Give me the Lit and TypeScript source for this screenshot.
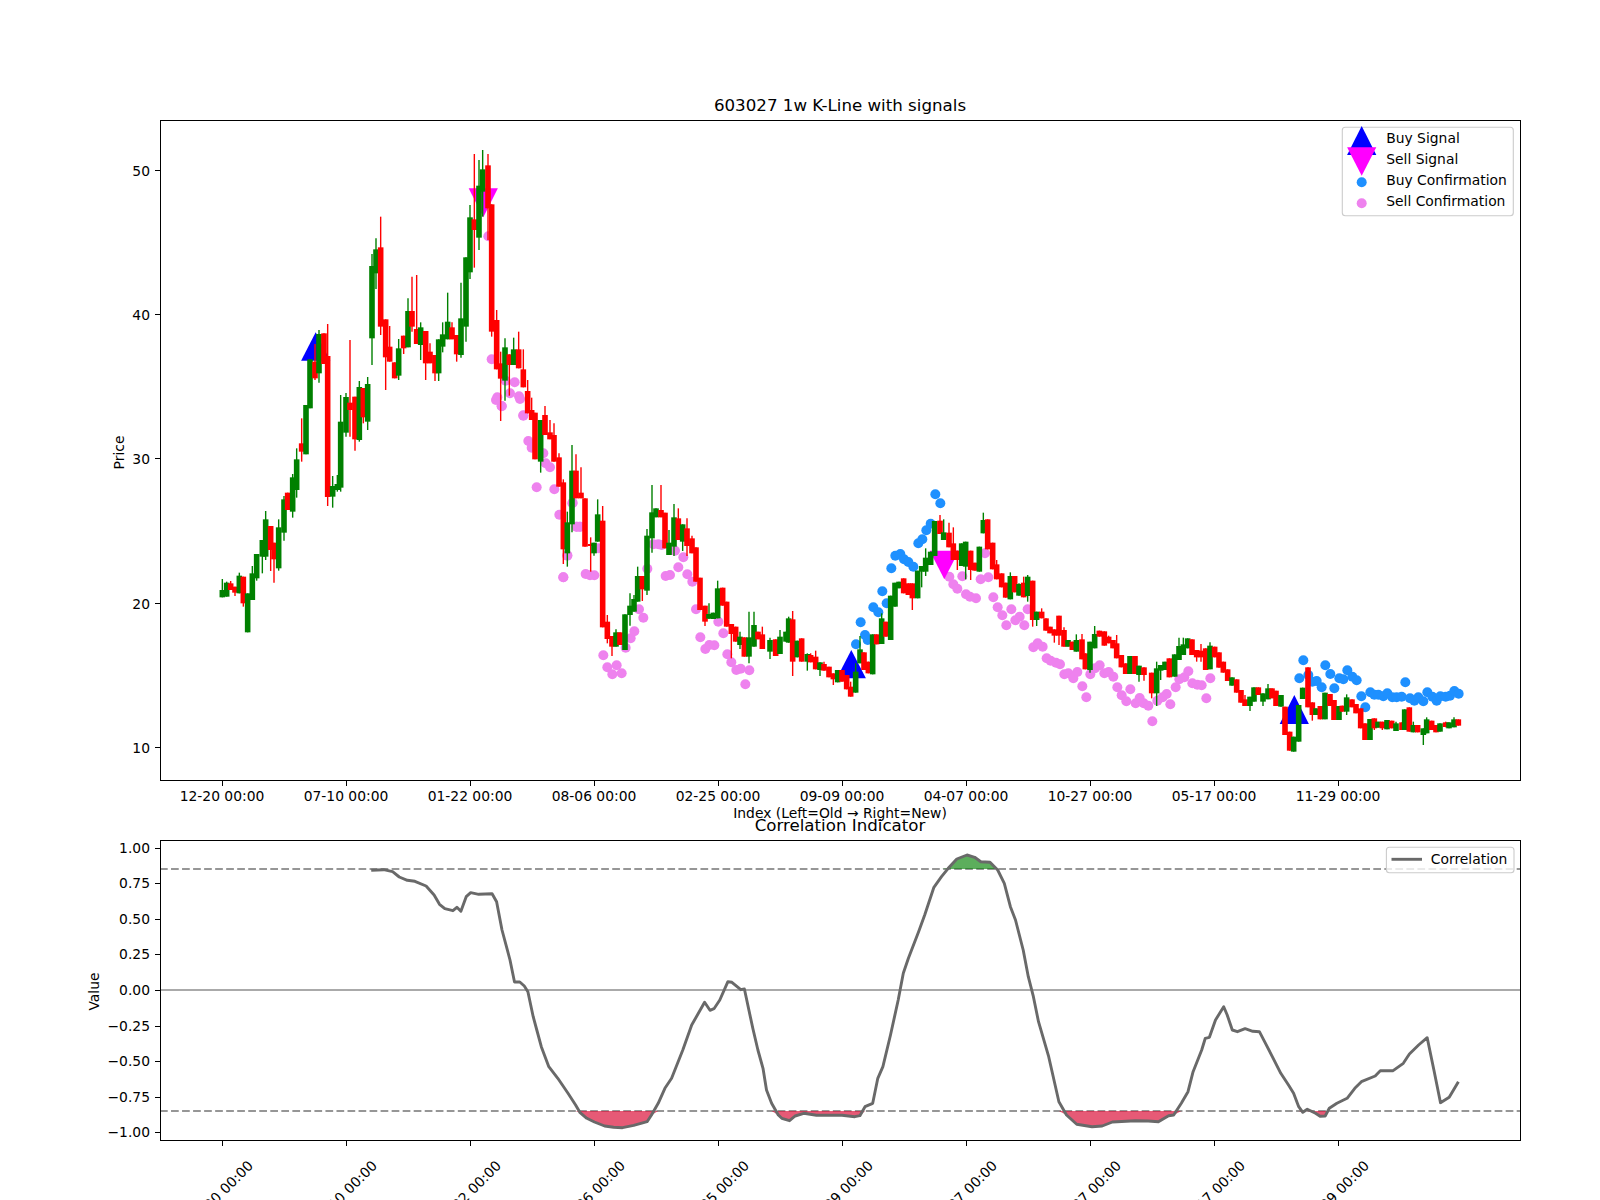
import { LitElement, html, svg, css } from "lit";
import { customElement } from "lit/decorators.js";

// Each segment is [originX, originY, rows]; a row is "colour x top bottom wickTop wickBottom", measured at 3x.
const SEGMENTS: [number, number, string][] = [
  [200, 400, `g 67 570 592 537;g 80 548 590 545;r 92 550 570 543;r 105 560 578 - 588;g 118 527 580 518;r 130 530 610 - 620;g 143 580 697;g 157 520 600 498;g 170 462 535 - 542;g 187 420 470 - 520;g 197 358 470 333 480;r 212 378 450 - 513;r 222 428 478 - 548;g 236 382 505 358 512;g 252 298 398 288 422;r 263 278 330;g 278 232 335 222 353;g 290 178 270 145 293;r 305 130 155 55 185;g 318 15 163`],
  [140, 90, `g 510 808 955;r 525 815 865 762 870;g 537 732 850 720 878;r 552 730 822;r 563 798 1221 702 1248`],
  [200, 400, `g 398 258 290 228 323;g 412 252 270 225 275;g 422 65 263 -15 275;g 438 -9 98 -21 110;r 450 8 30 -180 110;r 465 -10 118 - 152;g 478 -39 120 -57 125;r 490 -36 52 - 70;g 503 -48 65 -69 90`],
  [140, 90, `g 696 528 745 492 825;g 708 478 550 445 597;r 722 472 710 380 735;r 737 688 802 - 900;r 749 770 815 708;r 764 817 865;g 776 775 857 747 870;r 791 737 775 - 792;g 804 663 772 625;r 816 663 710 560 725;r 830 717 762 555;g 842 712 765 697 810;r 857 723 820 - 870;r 870 785 820 760;r 885 795 850 - 873;g 896 748 850 - 873;g 908 733 770 697 787;g 923 695 748 608;r 936 712 748 697;r 950 735 793 - 815;g 963 685 795 578 803;g 978 502 710 - 755;g 990 382 547 345 567;r 1003 388 420 192 533;g 1017 287 443 210 480;g 1028 238 305 180 380;r 1044 226 355 192 450;r 1055 343 725 - 740;r 1070 690 838 660;r 1082 820 866 785 993;g 1095 772 872 745 932;r 1108 793 825 - 917;g 1121 778 825 743;r 1136 778 835 725;r 1150 838 892 778`],
  [440, 130, `r 263 783 850 750;r 275 840 870 803`],
  [200, 400, `r 1005 38 178;g 1022 60 185 - 218;r 1035 45 105 18;r 1050 97 118 60;r 1062 105 185 70;r 1077 172 260 160;r 1090 247 448 238 492;g 1102 367 460 335 500;g 1116 212 373 135 397;r 1128 212 295 163;r 1143 278 295 202;r 1155 295 440;r 1172 432 438 412 515;g 1182 428 460 - 467;g 1193 343 425 298;r 1208 362 682 318;r 1222 665 717 645 730;r 1236 708 740 - 768;g 1248 697 740 688`],
  [560, 430, `r 180 607 645;g 195 553 660;g 210 527 555 490 587;g 222 507 545 495;g 233 438 515 410;r 247 438 478 - 513;g 261 317 482 297 495;g 276 247 325 165 368;g 288 235 262;r 303 240 262 165;r 315 248 355;g 327 338 375 300;g 342 262 350 222 378;r 355 265 330 235;g 368 283 335 - 363;r 381 295 348 265 378;r 396 325 370 317;r 408 352 455;r 420 443 540;r 435 527 575 - 588;g 447 552 566 520 567;g 460 548 567;g 473 475 565 452;r 488 473 527;r 500 515 590;r 514 582 612 - 685;r 527 590 635;g 540 620 645 605 657;r 553 622 680;g 567 622 680 545 700;g 582 585 650 545;r 594 605 628;r 607 613 657 590;g 630 630 665 623 687;r 647 628 678;g 660 620 672 600;g 678 605 635;g 686 565 638 560;r 698 568 695 543 738;g 712 632 682;r 725 625 695;g 742 672 695 670 722;r 752 675 697 670;r 767 680 718 662;g 780 697 720 - 738;r 792 702 722 695;r 807 710 742;r 820 730 748 - 765;g 833 720 757;r 846 720 755;r 860 735 778;r 872 770 800 755;g 887 725 788 700;g 900 658 700 618;r 912 667 720;r 925 695 730;g 938 613 733;r 950 613 643;g 965 565 642 550;r 978 575 620;g 992 497 630;g 1005 458 530;g 1017 455 475;r 1031 445 490;r 1045 460 495;r 1057 460 505 - 540;g 1073 422 505;g 1085 408 425 - 472;g 1097 383 425 355 438;g 1112 365 405;g 1124 273 378;r 1140 272 312 255;g 1151 307 330 268;r 1167 308 352 278;r 1180 340 390 292;r 1192 362 390 - 420;g 1205 340 408;g 1217 335 410 - 448;r 1232 362 420 - 450;r 1245 398 422;g 1258 350 425`],
  [820, 470, `g 490 150 190 128;r 503 148 238;r 518 218 298;r 530 283 328 270;r 545 310 352;r 557 338 383;g 571 318 388 307;r 584 318 367;g 597 342 377 340;r 611 338 382 320;g 623 320 378 315 395;r 638 332 450 - 470;g 650 425 450 - 468;r 665 425 445 415;r 678 445 482;r 690 470 490;r 703 478 497 - 518;r 717 437 497 - 525;r 732 480 530 472;g 744 510 530;r 757 515 540;g 769 510 545 493;r 786 508 568 492;r 796 550 598;g 810 515 600 - 608;g 824 492 535 468;r 838 482 500;r 853 484 527;r 866 500 520 497;r 879 510 535;r 890 520 565 495;r 904 555 592;r 917 580 612;g 930 558 612;r 945 558 612;g 957 587 615 - 635;r 972 592 615 - 632`],
  [1140, 600, `r 35 218 280 - 295;g 50 205 280 185 318;g 62 195 212 - 240;g 75 185 210;r 88 175 232;g 104 163 230;g 117 138 180 113;g 130 133 165 113;g 143 115 145;r 156 118 165;r 170 150 172 - 185;r 183 152 172 132 185;r 197 145 210;g 210 137 208 127;r 224 140 172;r 237 157 203;r 250 185 218;r 263 208 243;g 276 232 257;r 290 238 278;r 303 270 308;r 315 298 318 285;g 330 290 318 - 333;g 342 262 305;r 355 262 285;g 369 280 305 - 318;g 384 265 298 252;r 396 265 295;r 408 272 318;g 423 285 320;r 435 320 405;r 449 395 452;g 461 410 455;g 476 315 425;g 488 263 297;r 504 202 322;r 517 307 345 - 362;g 528 325 345;r 541 318 358;g 555 278 358;r 570 282 318;r 582 300 360;g 597 318 360;r 607 317 335;g 620 292 335 283 345;r 636 298 322;r 648 312 340;r 662 325 385;r 675 370 420;g 690 357 420;r 703 355 385 - 390;g 714 365 383;r 727 365 385 - 390;g 741 360 388;r 755 362 385;g 768 370 393 365;r 786 367 390;g 794 328 390;r 808 322 395;g 820 375 397 365;r 833 375 397;g 850 385 405 - 435;g 860 358 400 352;r 875 362 390;r 888 375 397;g 900 370 395;r 917 367 381 365 382;g 927 367 385;g 942 358 382 352;r 955 358 377`],
];

const pts = (ox: number, oy: number, raw: string) =>
  raw.split(" ").map((p) => {
    const [a, b] = p.split(",").map(Number);
    return [ox + a / 3, oy + b / 3];
  });

const PINK = [
  ...pts(440, 130, "145,319 155,688 197,752 224,757 172,802 210,790 237,799 185,829 250,857"),
  ...pts(200, 400, "905,18 888,0 960,-3 970,46 985,123 995,143 1030,160 1037,190 1050,202 1010,262 1063,268 1117,310 1078,344 1130,380 1140,380 1090,532 1102,466 1157,522 1170,526 1183,526"),
  ...pts(560, 430, "10,442 22,377 38,218 50,290 60,290 115,355 130,676 142,712 157,733 170,706 185,730 197,653 212,625 223,604 237,538 250,563 262,416 280,343 295,343 305,345 345,362 317,438 330,435 355,412 370,382 382,433 397,455 408,538 421,622 436,657 448,645 463,646 475,575 490,610 502,673 514,697 529,720 542,716 568,721 556,763"),
  ...pts(820, 470, "495,250 388,320 427,319 400,343 412,356 438,373 450,380 468,385 482,328 505,322 520,382 533,412 574,418 623,418 547,436 599,440 586,451 559,466 613,466 640,532 653,520 668,530 680,565 692,572 708,578 720,583 733,613 745,610 760,625 772,606 787,649 799,682 811,613 825,595 839,586 853,610 866,606 880,620 892,652 905,676 919,694 931,658 947,700 959,684 971,700 985,707 997,754 1012,692 1028,682 1040,672 1051,703 1067,652 1078,628 1093,622 1105,604 1117,640 1132,644 1145,646 1159,685 1171,625"),
];

const BLUE = [
  ...pts(820, 470, "108,523 122,457 135,495 143,510 160,412 175,427 187,364 200,400 214,295 226,257 241,252 252,268 265,276 280,290 295,220 307,208 319,181 332,161 346,73 361,100"),
  ...pts(1140, 600, "478,235 490,181 505,225 517,245 530,243 545,262 556,196 571,222 583,265 598,235 610,238 622,211 637,230 650,241 664,289 676,322 691,277 703,284 715,284 730,289 742,280 757,292 770,292 785,290 796,247 810,295 823,302 835,292 850,304 862,277 877,290 890,302 901,289 917,290 930,287 943,273 956,281"),
];

const corr8 = "697,301 725,299 745,305 760,321 778,331 795,334 820,348 838,375 850,403 862,416 880,422 889,412 898,424 910,380 920,368 938,373 968,371 978,395 990,480 1008,570 1018,636 1030,636 1040,648 1048,665 1060,740 1068,780 1078,830 1095,890 1115,925 1138,970 1155,1005 1165,1028 1180,1045 1197,1056 1220,1068 1240,1072 1260,1073 1285,1066 1315,1055 1325,1035 1340,1000 1355,955 1370,925 1395,840 1415,765 1444,697 1456,721 1465,716 1478,690 1496,635 1505,637 1525,659 1533,657";
const corr9 = "25,775 35,840 45,895 52,960 62,1000 75,1035 82,1045 97,1052 108,1038 125,1030 150,1036 200,1036 225,1040 235,1037 245,1010 260,1000 270,925 280,890 295,795 310,690 320,610 330,565 350,485 362,435 380,352 395,320 408,295 425,267 445,255 460,262 472,275 490,277 505,300 518,340 530,410 540,450 555,540 565,620 575,680 585,755 605,860 625,995 640,1035 660,1063 690,1070 710,1068 730,1056 775,1052 800,1053 820,1055 840,1037 850,1035 865,1000 878,965 888,905 905,840 912,805 920,802 932,750 948,710 955,735 965,780 975,785 990,776 1005,784 1018,785 1030,820 1045,865 1060,910 1075,945 1085,970 1095,1010 1103,1027 1112,1018 1128,1030 1137,1039 1147,1038 1155,1015 1170,1000 1190,985 1205,955 1218,935 1245,918 1255,902 1280,902 1300,880 1312,852 1330,825 1347,803 1360,900 1373,998 1390,982 1408,935";
const scalePts = (raw: string, ox: number, k: number) =>
  raw.split(" ").map((p) => {
    const [a, b] = p.split(",").map(Number);
    return [ox + a / k, 770 + b / 3];
  });
const CORR = [...scalePts(corr8, 60, 2.24), ...scalePts(corr9, 740, 1.96)];
const LOW = 1111;
const HIGH = 869;
const poly = (list: number[][]) => list.map((p) => `${p[0].toFixed(1)},${p[1].toFixed(1)}`).join(" ");

const TICKS = [
  [222.5, "12-20 00:00"], [346.5, "07-10 00:00"], [470.5, "01-22 00:00"], [594.5, "08-06 00:00"], [718.5, "02-25 00:00"],
  [842.5, "09-09 00:00"], [966.5, "04-07 00:00"], [1090.5, "10-27 00:00"], [1214.5, "05-17 00:00"], [1338.5, "11-29 00:00"],
] as [number, string][];
const PRICE = [[170.5, "50"], [314.5, "40"], [458.5, "30"], [603.5, "20"], [747.5, "10"]] as [number, string][];
const VALUE = [1, 0.75, 0.5, 0.25, 0, -0.25, -0.5, -0.75, -1];

const up = (x: number, apex: number, base: number) => `${x},${apex} ${x - 14.6},${base} ${x + 14.6},${base}`;
const down = (x: number, top: number, apex: number) => `${x - 14.6},${top} ${x + 14.6},${top} ${x},${apex}`;

@customElement("app-root")
export class AppRoot extends LitElement {
  static styles = css`
    :host { display: block; width: 1600px; height: 1200px; background: #fff; overflow: hidden; }
    svg { display: block; }
    text { font-family: "DejaVu Sans", sans-serif; font-size: 13.89px; fill: #000; }
    .title { font-size: 16.67px; text-anchor: middle; }
    .mid { text-anchor: middle; }
    .end { text-anchor: end; }
    .spine { fill: none; stroke: #000; stroke-width: 1; }
    .tick { stroke: #000; stroke-width: 1; }
    .frame { fill: #fff; fill-opacity: 0.8; stroke: #ccc; stroke-width: 1.11; }
    .wick { stroke-width: 1.4; }
    .g { stroke: #008000; fill: #008000; }
    .r { stroke: #ff0000; fill: #ff0000; }
    .body { stroke: none; }
    .pink { fill: #ee82ee; }
    .blue { fill: #1e90ff; }
    .buy { fill: #0000ff; }
    .sell { fill: #ff00ff; }
    .level { stroke: #969696; stroke-width: 2.08; stroke-dasharray: 7.7 3.33; }
    .zero { stroke: #aaaaaa; stroke-width: 2.08; }
    .corr { fill: none; stroke: #696969; stroke-width: 2.9; stroke-linejoin: round; }
    .fill-low { fill: #dc143c; fill-opacity: 0.7; }
    .fill-high { fill: #008000; fill-opacity: 0.64; }
  `;

  private candles() {
    const rows = SEGMENTS.flatMap(([ox, oy, raw]) =>
      raw.split(";").map((row) => {
        const [c, x, t, b, wt, wb] = row.split(" ");
        const top = oy + Number(t) / 3;
        const bot = oy + Number(b) / 3;
        return {
          c,
          x: ox + Number(x) / 3,
          top,
          bot,
          wt: wt && wt !== "-" ? oy + Number(wt) / 3 : top,
          wb: wb && wb !== "-" ? oy + Number(wb) / 3 : bot,
        };
      })
    ).sort((p, q) => p.x - q.x);
    return rows.map(
      (k) => svg`<line class="wick ${k.c}" x1=${k.x} x2=${k.x} y1=${k.wt} y2=${k.wb}></line>
        <rect class="body ${k.c}" x=${k.x - 2.8} y=${k.top} width="5.6" height=${k.bot - k.top}></rect>`
    );
  }

  render() {
    return html`<svg width="1600" height="1200" viewBox="0 0 1600 1200" xmlns="http://www.w3.org/2000/svg">
      <rect width="1600" height="1200" fill="#fff"></rect>

      ${PINK.map((p) => svg`<circle class="pink" cx=${p[0]} cy=${p[1]} r="5"></circle>`)}
      ${BLUE.map((p) => svg`<circle class="blue" cx=${p[0]} cy=${p[1]} r="5"></circle>`)}
      <polygon class="buy" points=${up(315.7, 332.3, 360.7)}></polygon>
      <polygon class="buy" points=${up(851.3, 650, 678.3)}></polygon>
      <polygon class="buy" points=${up(1294.3, 695, 724)}></polygon>
      <polygon class="sell" points=${down(483.3, 188.3, 217.3)}></polygon>
      <polygon class="sell" points=${down(944.3, 550.7, 579.3)}></polygon>
      ${this.candles()}

      <rect class="spine" x="160.5" y="120.5" width="1360" height="660"></rect>
      ${PRICE.map(([y, t]) => svg`<line class="tick" x1="155" x2="160" y1=${y} y2=${y}></line>
        <text class="end" x="150" y=${y + 5.3}>${t}</text>`)}
      ${TICKS.map(([x, t]) => svg`<line class="tick" x1=${x} x2=${x} y1="781" y2="786"></line>
        <text class="mid" x=${x - 0.5} y="800.6">${t}</text>`)}
      <text class="title" x="840" y="111.2">603027 1w K-Line with signals</text>
      <text class="mid" transform="translate(124,452.5) rotate(-90)">Price</text>
      <text class="mid" x="840" y="818">Index (Left=Old → Right=New)</text>

      <rect class="frame" x="1342.3" y="127.3" width="171" height="88.4" rx="3"></rect>
      <polygon class="buy" points=${up(1361.7, 126, 155)}></polygon>
      <polygon class="sell" points=${down(1361.7, 147.3, 175.7)}></polygon>
      <circle class="blue" cx="1361.7" cy="182.3" r="5"></circle>
      <circle class="pink" cx="1361.7" cy="203.3" r="5"></circle>
      <text x="1386.2" y="143.3">Buy Signal</text>
      <text x="1386.2" y="164.2">Sell Signal</text>
      <text x="1386.2" y="185.2">Buy Confirmation</text>
      <text x="1386.2" y="206">Sell Confirmation</text>

      <line class="level" x1="160" x2="1520" y1=${HIGH} y2=${HIGH}></line>
      <line class="level" x1="160" x2="1520" y1=${LOW} y2=${LOW}></line>
      <line class="zero" x1="160" x2="1520" y1="990" y2="990"></line>
      <polygon class="fill-low" points=${poly(CORR.map((p) => [p[0], Math.max(p[1], LOW)]))}></polygon>
      <polygon class="fill-high" points=${poly(CORR.map((p) => [p[0], Math.min(p[1], HIGH)]))}></polygon>
      <polyline class="corr" points=${poly(CORR)}></polyline>

      <rect class="spine" x="160.5" y="840.5" width="1360" height="300"></rect>
      ${VALUE.map((v) => {
        const y = Math.round(990 - v * 142.4) + 0.5;
        const t = (v < 0 ? "\u2212" : "") + Math.abs(v).toFixed(2);
        return svg`<line class="tick" x1="155" x2="160" y1=${y} y2=${y}></line>
          <text class="end" x="150" y=${y + 4.7}>${t}</text>`;
      })}
      ${TICKS.map(([x, t]) => svg`<line class="tick" x1=${x} x2=${x} y1="1141" y2="1146"></line>
        <text class="mid" transform="translate(${x - 2},1193) rotate(-45)" y="5">${t}</text>`)}
      <text class="title" x="840" y="831.2">Correlation Indicator</text>
      <text class="mid" transform="translate(99,991.5) rotate(-90)">Value</text>

      <rect class="frame" x="1386.4" y="847.3" width="127.6" height="25.4" rx="3"></rect>
      <line x1="1391.5" x2="1422" y1="859.3" y2="859.3" class="corr"></line>
      <text x="1430.8" y="864.3">Correlation</text>
    </svg>`;
  }
}
